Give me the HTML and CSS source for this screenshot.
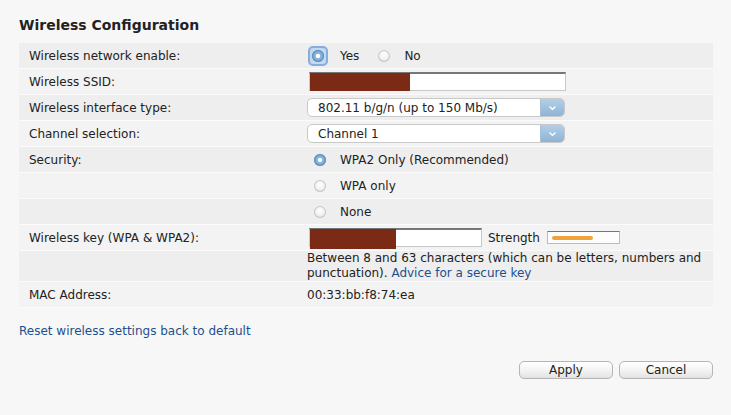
FILE: index.html
```html
<!DOCTYPE html>
<html>
<head>
<meta charset="utf-8">
<link rel="stylesheet" href="styles.css">
</head>
<body>
<div class="page">
  <h1 class="title">Wireless Configuration</h1>
  <div class="table">
    <div class="row dark">
      <div class="label">Wireless network enable:</div>
      <div class="value">
        <span class="radio focus"><span class="radio-in checked"></span></span>
        <span class="opt">Yes</span>
        <span class="radio"><span class="radio-in"></span></span>
        <span class="opt">No</span>
      </div>
    </div>
    <div class="row light">
      <div class="label">Wireless SSID:</div>
      <div class="value"><div class="input ssid"><span class="redact r1"></span></div></div>
    </div>
    <div class="row dark">
      <div class="label">Wireless interface type:</div>
      <div class="value"><div class="select"><span class="sel-text">802.11 b/g/n (up to 150 Mb/s)</span><span class="sel-btn"><svg width="9" height="6" viewBox="0 0 9 6"><path d="M1.5 1.5 L4.5 4.2 L7.5 1.5" fill="none" stroke="#fff" stroke-width="1.4"/></svg></span></div></div>
    </div>
    <div class="row light">
      <div class="label">Channel selection:</div>
      <div class="value"><div class="select"><span class="sel-text">Channel 1</span><span class="sel-btn"><svg width="9" height="6" viewBox="0 0 9 6"><path d="M1.5 1.5 L4.5 4.2 L7.5 1.5" fill="none" stroke="#fff" stroke-width="1.4"/></svg></span></div></div>
    </div>
    <div class="row dark">
      <div class="label">Security:</div>
      <div class="value"><span class="radio sec"><span class="radio-in checked"></span></span><span class="opt">WPA2 Only (Recommended)</span></div>
    </div>
    <div class="row light">
      <div class="label"></div>
      <div class="value"><span class="radio sec"><span class="radio-in"></span></span><span class="opt">WPA only</span></div>
    </div>
    <div class="row dark">
      <div class="label"></div>
      <div class="value"><span class="radio sec"><span class="radio-in"></span></span><span class="opt">None</span></div>
    </div>
    <div class="row light">
      <div class="label">Wireless key (WPA &amp; WPA2):</div>
      <div class="value">
        <div class="input key"><span class="redact r2"></span></div>
        <span class="strength-label">Strength</span>
        <div class="strength"><span class="strength-bar"></span></div>
      </div>
    </div>
    <div class="row dark tall">
      <div class="label"></div>
      <div class="help">
        <div class="help-line">Between 8 and 63 characters (which can be letters, numbers and</div>
        <div class="help-line"><span>punctuation).</span> <a class="link" href="#">Advice for a secure key</a></div>
      </div>
    </div>
    <div class="row light">
      <div class="label">MAC Address:</div>
      <div class="value">00:33:bb:f8:74:ea</div>
    </div>
  </div>
  <a class="link reset" href="#">Reset wireless settings back to default</a>
  <div class="buttons">
    <button class="btn">Apply</button>
    <button class="btn">Cancel</button>
  </div>
</div>
</body>
</html>
```
FILE: styles.css
```css
html, body { margin: 0; padding: 0; }
body {
  background: #f7f7f7;
  font-family: "DejaVu Sans", Verdana, sans-serif;
  font-size: 12px;
  color: #222;
  width: 731px;
  height: 415px;
  overflow: hidden;
}
.page { padding: 15px 18px 0 19px; }
.title {
  margin: 0 0 8px 0;
  font-size: 14px;
  font-weight: bold;
  color: #222;
  line-height: 20px;
}
.table { display: flex; flex-direction: column; }
.row {
  display: flex;
  align-items: center;
  height: 25px;
  border-bottom: 1px solid #fbfbfb;
}
.row.dark { background: #eeeeee; }
.row.light { background: #f3f3f3; }
.row.tall { height: 30px; }
.label { width: 278px; padding-left: 10px; flex: none; }
.value { display: flex; align-items: center; flex: 1; }
.radio {
  width: 13px; height: 13px;
  display: inline-flex; align-items: center; justify-content: center;
  flex: none;
}
.radio-in {
  width: 12px; height: 12px; border-radius: 50%;
  background: radial-gradient(circle at 50% 40%, #fff 0%, #f2f2f2 45%, #d0d0d0 100%);
  box-shadow: inset 0 0 0 1px #c8c8c8;
}
.radio-in.checked {
  background: radial-gradient(circle at 50% 50%, #fff 0%, #fff 22%, #8fb8dc 30%, #6aa0d0 70%, #5a8fc4 100%);
  box-shadow: inset 0 0 0 1px #5d8ec0;
}
.radio.focus {
  width: 16px; height: 16px;
  margin-left: 3px;
  border-radius: 3px;
  box-shadow: 0 0 0 2px #86aedd;
  background: #c4d8ee;
}
.opt { margin-left: 14px; }
.radio.focus + .opt { margin-left: 14px; margin-right: 18px; }
.radio.sec { margin-left: 6px; }
.input {
  height: 16px;
  background: #fff;
  border: 1px solid #c8c8c8;
  border-top: 2px solid #777;
  margin-left: 2px;
  display: flex;
}
.input.ssid { width: 255px; }
.input.key { width: 171px; }
.redact { display: block; background: #7b2a16; height: 18px; margin-top: -1px; }
.redact.r1 { width: 100px; }
.redact.r2 { width: 86px; height: 20px; }
.select {
  width: 256px; height: 17px;
  background: #fff;
  border: 1px solid #c9c9c9;
  border-radius: 5px;
  display: flex; align-items: center;
  overflow: hidden;
}
.sel-text { flex: 1; padding-left: 10px; }
.sel-btn {
  width: 23px; height: 17px;
  background: linear-gradient(#b4cfe6, #8db4d6);
  display: flex; align-items: center; justify-content: center;
  border-left: 1px solid #a7c0d6;
}
.strength-label { margin-left: 6px; }
.strength {
  width: 71px; height: 11px;
  margin-left: 7px;
  background: #fdfdfd;
  border: 1px solid #bbb;
  border-top-color: #777;
  display: flex; align-items: center;
}
.strength-bar {
  display: block;
  width: 41px; height: 4px;
  margin-left: 4px;
  background: #f2a23a;
  border-radius: 2px;
}
.help { line-height: 15px; font-size: 12px; }
.help-line { white-space: nowrap; }
.link { color: #1d4f8f; text-decoration: none; }
.reset { display: inline-block; margin-top: 16px; }
.buttons {
  display: flex;
  justify-content: flex-end;
  gap: 6px;
  margin-top: 23px;
}
.btn {
  width: 94px; height: 18px;
  font-family: "DejaVu Sans", Verdana, sans-serif;
  font-size: 12px;
  color: #222;
  border: 1px solid #b5b5b5;
  border-radius: 5px;
  background: linear-gradient(#ffffff 0%, #f4f4f4 50%, #e2e2e2 100%);
  padding: 0;
  line-height: 16px;
}
```
